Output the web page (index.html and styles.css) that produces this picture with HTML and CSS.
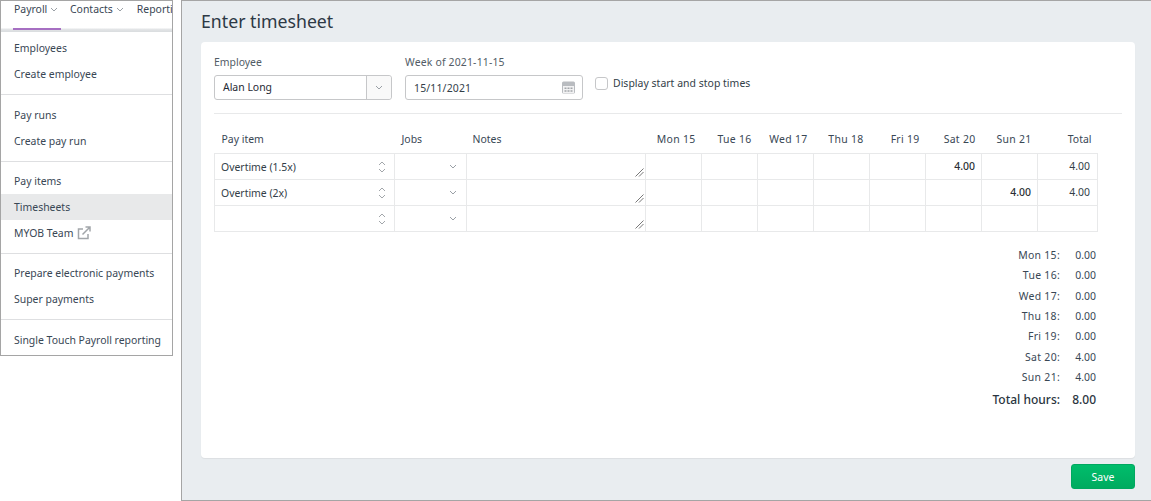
FILE: index.html
```html
<!DOCTYPE html>
<html lang="en">
<head>
<meta charset="utf-8">
<title>Enter timesheet</title>
<link rel="stylesheet" href="styles.css">
</head>
<body>
<div class="app">
  <aside class="side">
    <nav class="topnav">
      <div class="navitem active"><span>Payroll</span><svg class="chev" viewBox="0 0 8 5"><path d="M1 1l3 3 3-3"/></svg></div>
      <div class="navitem"><span>Contacts</span><svg class="chev" viewBox="0 0 8 5"><path d="M1 1l3 3 3-3"/></svg></div>
      <div class="navitem clip"><span>Reporti</span></div>
    </nav>
    <div class="menu">
      <div class="group first">
        <a class="mi">Employees</a>
        <a class="mi">Create employee</a>
      </div>
      <div class="group tall">
        <a class="mi">Pay runs</a>
        <a class="mi">Create pay run</a>
      </div>
      <div class="group">
        <a class="mi">Pay items</a>
        <a class="mi current">Timesheets</a>
        <a class="mi">MYOB Team
          <svg class="ext" viewBox="0 0 14 14"><path d="M6 3H1.500v9.500H11V8" /><path d="M5.500 8.500L12.500 1.500M8.500 1h4.500v4.500" /></svg>
        </a>
      </div>
      <div class="group">
        <a class="mi">Prepare electronic payments</a>
        <a class="mi">Super payments</a>
      </div>
      <div class="group last">
        <a class="mi">Single Touch Payroll reporting</a>
      </div>
    </div>
  </aside>
  <main class="main">
    <h1 class="title">Enter timesheet</h1>
    <section class="card">
      <div class="filters">
        <div class="field emp">
          <label class="lbl">Employee</label>
          <div class="combo">
            <span class="comboval">Alan Long</span>
            <span class="combobtn"><svg class="chev" viewBox="0 0 8 5"><path d="M1 1l3 3 3-3"/></svg></span>
          </div>
        </div>
        <div class="field week">
          <label class="lbl digits">Week of 2021-11-15</label>
          <div class="date">
            <span class="digits">15/11/2021</span>
            <svg class="cal" viewBox="0 0 13 13"><rect x="0" y="0.500" width="13" height="12" rx="1.500" fill="#b9bcc0"/><rect x="1" y="5" width="11" height="7" fill="#f2f2f3"/><path class="dots" d="M2.500 6.500h2v1.500h-2zM5.500 6.500h2v1.500h-2zM8.500 6.500h2v1.500h-2zM2.500 9.200h2v1.500h-2zM5.500 9.200h2v1.500h-2zM8.500 9.200h2v1.500h-2z"/></svg>
          </div>
        </div>
        <label class="check"><span class="box"></span><span>Display start and stop times</span></label>
      </div>
      <table class="grid">
        <thead>
          <tr>
            <th class="c-item">Pay item</th><th class="c-jobs">Jobs</th><th class="c-notes">Notes</th>
            <th class="day">Mon 15</th><th class="day">Tue 16</th><th class="day">Wed 17</th><th class="day">Thu 18</th><th class="day">Fri 19</th><th class="day">Sat 20</th><th class="day">Sun 21</th><th class="total">Total</th>
          </tr>
        </thead>
        <tbody>
          <tr>
            <td class="item"><div class="cellflex"><span>Overtime (1.5x)</span><svg class="updown" viewBox="0 0 8 12"><path d="M1 4l3-3 3 3M1 8l3 3 3-3"/></svg></div></td>
            <td class="jobs"><div class="cellend"><svg class="chev" viewBox="0 0 8 5"><path d="M1 1l3 3 3-3"/></svg></div></td>
            <td class="notes"><svg class="grip" viewBox="0 0 9 9"><path d="M0.500 8.500L8.500 0.500M4 8.500L8.500 4"/></svg></td>
            <td></td><td></td><td></td><td></td><td></td><td class="num strong">4.00</td><td></td><td class="num">4.00</td>
          </tr>
          <tr>
            <td class="item"><div class="cellflex"><span>Overtime (2x)</span><svg class="updown" viewBox="0 0 8 12"><path d="M1 4l3-3 3 3M1 8l3 3 3-3"/></svg></div></td>
            <td class="jobs"><div class="cellend"><svg class="chev" viewBox="0 0 8 5"><path d="M1 1l3 3 3-3"/></svg></div></td>
            <td class="notes"><svg class="grip" viewBox="0 0 9 9"><path d="M0.500 8.500L8.500 0.500M4 8.500L8.500 4"/></svg></td>
            <td></td><td></td><td></td><td></td><td></td><td></td><td class="num strong">4.00</td><td class="num">4.00</td>
          </tr>
          <tr>
            <td class="item"><div class="cellflex"><span></span><svg class="updown" viewBox="0 0 8 12"><path d="M1 4l3-3 3 3M1 8l3 3 3-3"/></svg></div></td>
            <td class="jobs"><div class="cellend"><svg class="chev" viewBox="0 0 8 5"><path d="M1 1l3 3 3-3"/></svg></div></td>
            <td class="notes"><svg class="grip" viewBox="0 0 9 9"><path d="M0.500 8.500L8.500 0.500M4 8.500L8.500 4"/></svg></td>
            <td></td><td></td><td></td><td></td><td></td><td></td><td></td><td></td>
          </tr>
        </tbody>
      </table>
      <dl class="summary">
        <dt>Mon 15:</dt><dd>0.00</dd>
        <dt>Tue 16:</dt><dd>0.00</dd>
        <dt>Wed 17:</dt><dd>0.00</dd>
        <dt>Thu 18:</dt><dd>0.00</dd>
        <dt>Fri 19:</dt><dd>0.00</dd>
        <dt>Sat 20:</dt><dd>4.00</dd>
        <dt>Sun 21:</dt><dd>4.00</dd>
        <dt class="tot">Total hours:</dt><dd class="tot">8.00</dd>
      </dl>
    </section>
    <div class="actions"><button class="save" type="button">Save</button></div>
  </main>
</div>
</body>
</html>
```
FILE: styles.css
```css
* { box-sizing: border-box; }
html, body { margin: 0; padding: 0; height: 100%; background: #fff; overflow: hidden; }
body { font-family: "Noto Sans", "Open Sans", sans-serif; font-size: 10.450px; color: #333e48; }
.app { display: flex; height: 501px; }
.digits { letter-spacing: .17px; }

.side { width: 173px; flex: none; height: 356px; }
.topnav { display: flex; height: 32px; padding-left: 12px; overflow: hidden; border-top: 1px solid #a5a5a5; border-left: 1px solid #a5a5a5; border-right: 1px solid #a5a5a5;
  background: linear-gradient(#fff 0, #fff 27px, #e4e6e8 28px, #d9dcde 31px); }
.navitem { display: flex; align-items: flex-start; padding: 2px 0 0 1px; height: 29px; margin-right: 12px; white-space: nowrap; gap: 3px; line-height: 13px; color: #394755; flex: none; }
.navitem.active { box-shadow: inset 0 -2px 0 #a66fc2; width: 48px; margin-right: 8px; }
.chev { width: 8px; height: 5px; fill: none; stroke: #9aa0a6; stroke-width: 1; margin-top: 4px; flex: none; }
.menu { height: 324px; border: 1px solid #a5a5a5; border-top: 0; background: #fff; }
.group { padding: 6px 0 7px; border-bottom: 1px solid #dedfe1; }
.group.first { padding-top: 3px; }
.group.tall { padding-top: 7px; }
.group.last { padding-top: 7px; border-bottom: 0; }
.mi { display: flex; align-items: center; height: 26px; padding-left: 13px; color: #394755; white-space: nowrap; gap: 4px; }
.mi.current { background: #e8e9ea; }
.ext { width: 14px; height: 14px; fill: none; stroke: #a2a6aa; stroke-width: 1.500; }

.main { flex: 1; margin-left: 8px; height: 501px; background: #e9edf0; border-top: 1px solid #a5a5a5; border-left: 1px solid #a5a5a5; border-bottom: 1px solid #a5a5a5; padding: 0 16px 0 19px; display: flex; flex-direction: column; }
.title { margin: 0; font-size: 17.700px; font-weight: 400; line-height: 25px; height: 41px; padding-top: 8px; color: #2d3945; }
.card { height: 416px; background: #fff; border-radius: 4px; box-shadow: 0 1px 1px rgba(0,0,0,.06); padding: 13px 13px 0; }
.filters { display: flex; align-items: flex-start; height: 59px; border-bottom: 1px solid #e8e9ea; }
.field { display: flex; flex-direction: column; }
.emp { width: 178px; margin-right: 13px; }
.week { width: 178px; margin-right: 12px; }
.lbl { line-height: 15px; height: 20px; color: #525c66; }
.combo { display: flex; height: 25px; border: 1px solid #c6c7c9; border-radius: 3px; align-items: center; }
.comboval { flex: 1; padding: 0 0 1px 8px; color: #1f2a35; }
.combobtn { width: 25px; height: 23px; border-left: 1px solid #c6c7c9; background: #f9f9f9; display: flex; align-items: center; justify-content: center; border-radius: 0 3px 3px 0; }
.combobtn .chev { margin-top: 0; }
.date { display: flex; height: 25px; border: 1px solid #c6c7c9; border-radius: 3px; align-items: center; justify-content: space-between; padding: 0 7px 0 8px; color: #333e48; }
.cal { width: 13px; height: 13px; }
.dots { fill: #a2a6aa; }
.check { display: flex; align-items: center; gap: 5px; margin-top: 20px; height: 15px; color: #333e48; letter-spacing: .03px; }
.box { width: 13px; height: 13px; border: 1px solid #c6c7c9; border-radius: 3px; background: #fff; margin-top: 1px; }

.grid { border-collapse: collapse; table-layout: fixed; width: 884px; margin-top: 13px; }
.grid th { height: 26px; padding: 0 7px 2px; font-weight: 400; color: #394755; text-align: left; white-space: nowrap; line-height: 24px; border: 0; vertical-align: middle; }
.grid th.c-notes { padding-left: 6px; }
.grid th.day { text-align: right; padding: 0 6px 2px 0; width: 56px; letter-spacing: .3px; }
.grid th.total { text-align: right; width: 60px; padding: 0 6px 2px 0; }
.c-item { width: 180px; }
.c-jobs { width: 72px; }
.c-notes { width: 179px; }
.grid td { height: 26px; border: 1px solid #e8e9ea; padding: 0; position: relative; vertical-align: middle; line-height: 24px; }
.grid td.num { text-align: right; padding-right: 7px; line-height: 22px; padding-bottom: 2px; color: #333e48; }
.grid td.num.strong { padding-right: 6px; font-weight: 500; color: #2a2f35; }
.cellflex { display: flex; justify-content: space-between; align-items: center; padding: 0 8px 0 6px; color: #333e48; }
.cellend { display: flex; justify-content: flex-end; padding-right: 9px; }
.cellend .chev { margin-top: 0; }
.updown { width: 8px; height: 12px; fill: none; stroke: #a2a6aa; stroke-width: 1; }
.grip { position: absolute; right: 1px; bottom: 2px; width: 9px; height: 9px; fill: none; stroke: #555; stroke-width: .8; }

.summary { display: grid; grid-template-columns: auto 36px; justify-content: end; margin: 13px 26px 0 0; grid-auto-rows: 20.300px; align-items: center; text-align: right; }
.summary dt, .summary dd { margin: 0; line-height: 20px; }
.summary dt { color: #394755; letter-spacing: .3px; }
.summary dd { color: #394755; }
.summary .tot { font-size: 12px; color: #2a3540; font-weight: 500; margin-top: 6px; line-height: 20px; letter-spacing: 0; }

.actions { display: flex; justify-content: flex-end; padding-top: 6px; }
.save { width: 64px; height: 25px; border: 1px solid #00a860; border-radius: 3px; background: linear-gradient(#00bd6b, #00ab60); color: #fff; font: inherit; padding: 0; }
```
